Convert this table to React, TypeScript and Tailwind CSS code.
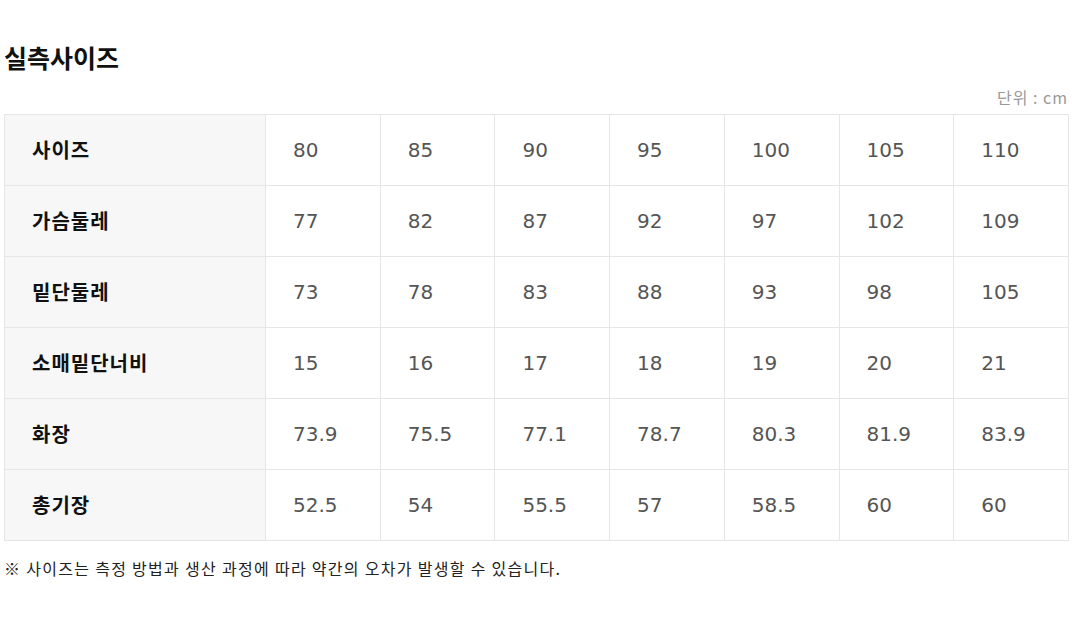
import React from 'react';

const sizes = ['80', '85', '90', '95', '100', '105', '110'];

const rows: { label: string; values: string[] }[] = [
  { label: '가슴둘레', values: ['77', '82', '87', '92', '97', '102', '109'] },
  { label: '밑단둘레', values: ['73', '78', '83', '88', '93', '98', '105'] },
  { label: '소매밑단너비', values: ['15', '16', '17', '18', '19', '20', '21'] },
  { label: '화장', values: ['73.9', '75.5', '77.1', '78.7', '80.3', '81.9', '83.9'] },
  { label: '총기장', values: ['52.5', '54', '55.5', '57', '58.5', '60', '60'] },
];

function Row({ label, values }: { label: string; values: string[] }) {
  return (
    <tr className="h-[71px]">
      <th className="w-[261px] bg-[#f7f7f7] border border-[#e6e6e6] pl-[27px] text-left text-[20px] tracking-[1px] font-bold text-[#111] font-['Noto_Sans_CJK_KR',sans-serif]">
        {label}
      </th>
      {values.map((v, i) => (
        <td
          key={i}
          className="border border-[#e6e6e6] pl-[27px] text-left text-[20px] text-[#555] font-['DejaVu_Sans',sans-serif]"
        >
          {v}
        </td>
      ))}
    </tr>
  );
}

export default function App() {
  return (
    <div className="w-[1072px] h-[620px] bg-white px-[4px] pt-[40px] font-['Noto_Sans_CJK_KR',sans-serif]">
      <h1 className="text-[25px] font-bold text-[#111] leading-[34px]">실측사이즈</h1>
      <div className="mt-[13px] text-right text-[16px] tracking-[1px] text-[#999] leading-[20px]">
        단위 : cm
      </div>
      <table className="mt-[7px] w-[1065px] border-collapse table-fixed">
        <tbody>
          <Row label="사이즈" values={sizes} />
          {rows.map((r) => (
            <Row key={r.label} label={r.label} values={r.values} />
          ))}
        </tbody>
      </table>
      <p className="mt-[17px] text-[16px] tracking-[1.3px] text-[#222] leading-[20px]">
        ※ 사이즈는 측정 방법과 생산 과정에 따라 약간의 오차가 발생할 수 있습니다.
      </p>
    </div>
  );
}
